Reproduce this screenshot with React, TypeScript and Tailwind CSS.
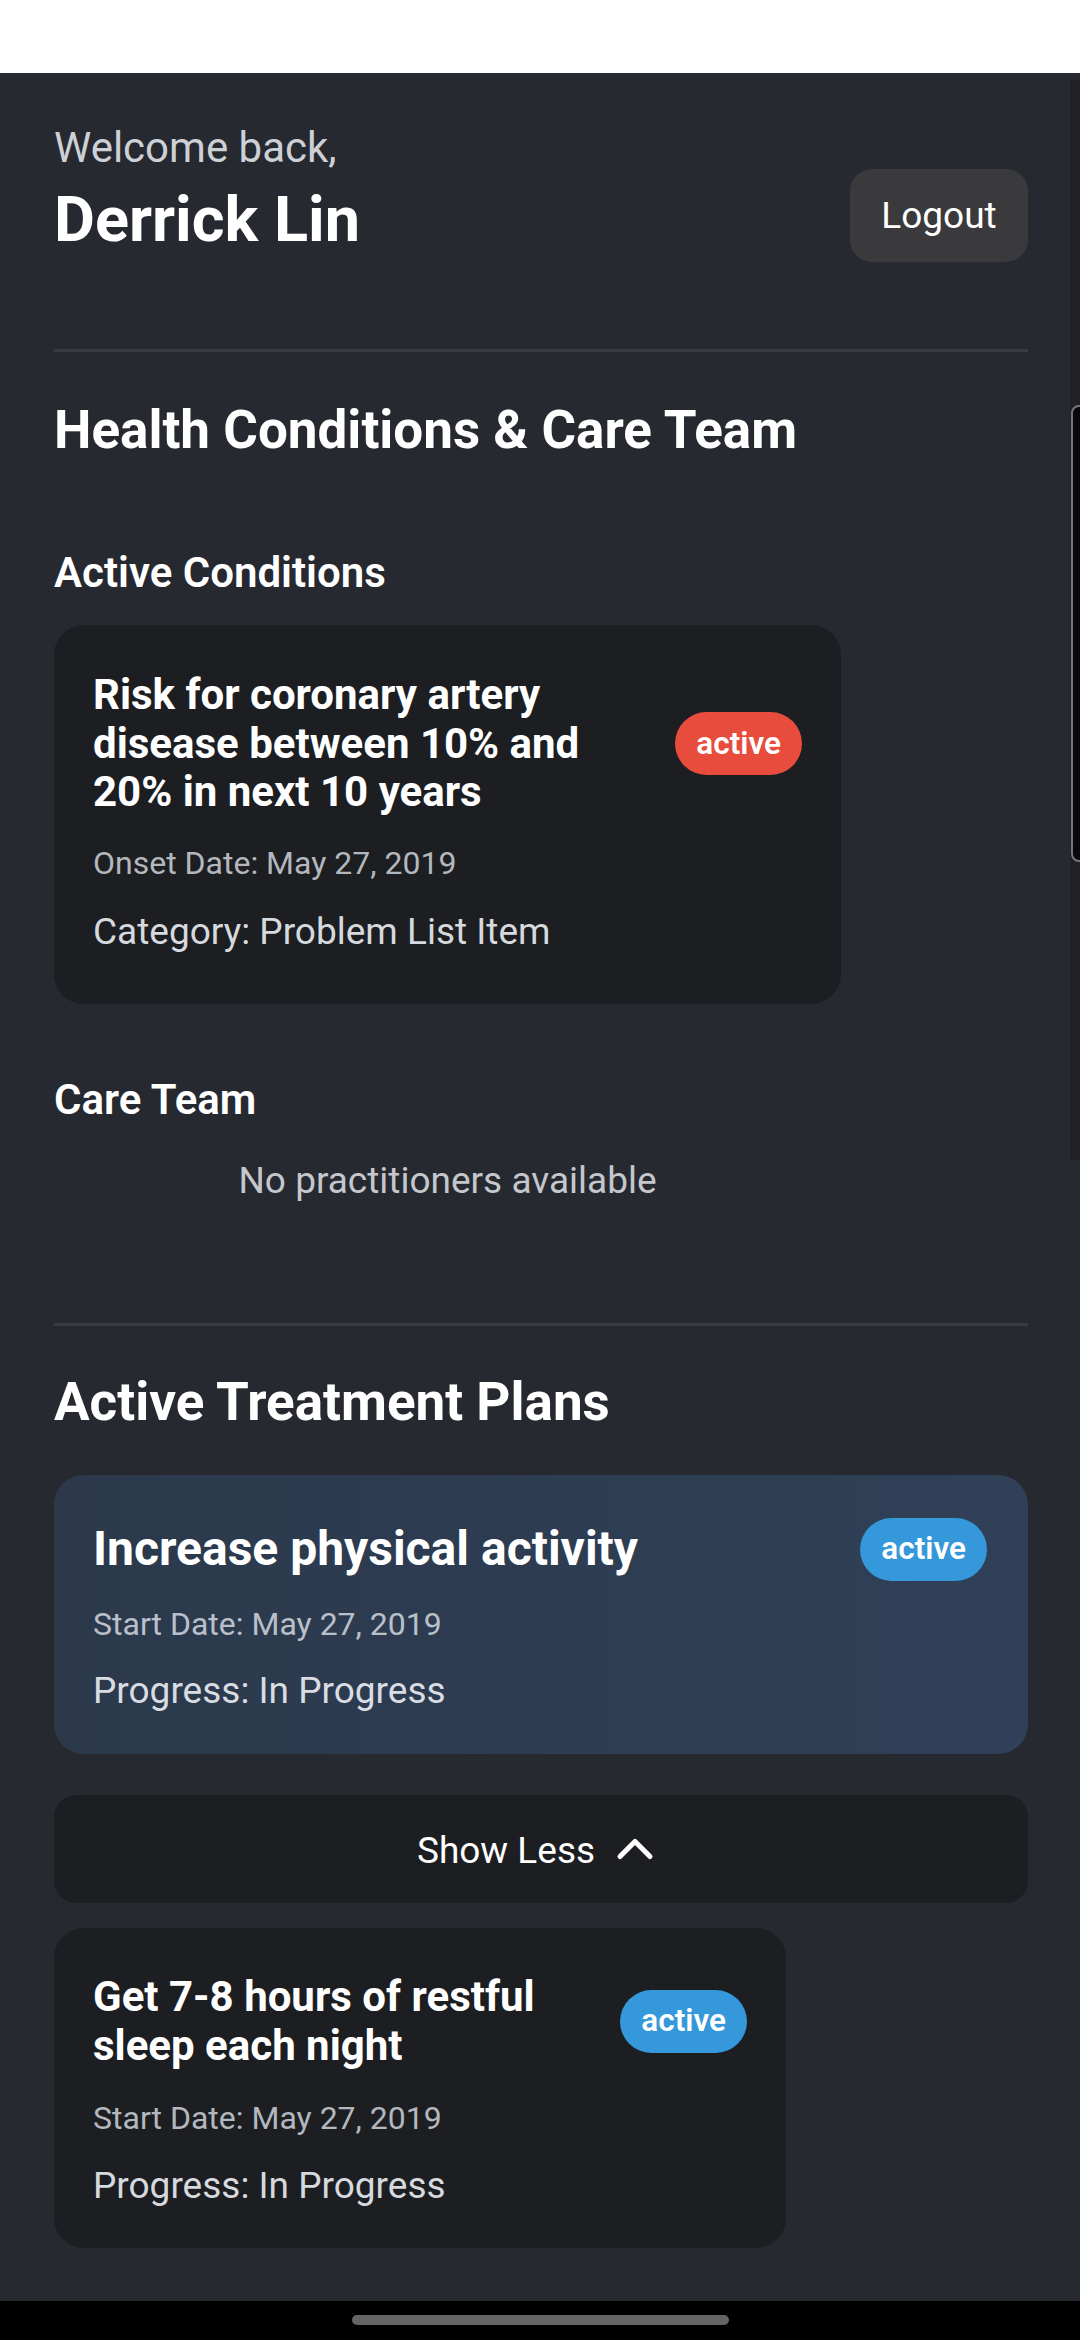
import React from "react";
import { ChevronUp } from "lucide-react";

function Badge({ color }: { color: "red" | "blue" }) {
  return (
    <div
      className={
        "shrink-0 h-[63px] px-[21px] rounded-full flex items-center text-white text-[31.5px] leading-none font-semibold " +
        (color === "red" ? "bg-[#e74c3c]" : "bg-[#3498db]")
      }
    >
      active
    </div>
  );
}

export default function App() {
  return (
    <div className="relative w-[1080px] h-[2340px] overflow-hidden flex flex-col font-['Roboto',sans-serif]">
      <div className="h-[73px] shrink-0 bg-white" />
      <div className="flex-1 bg-[#262930] pl-[54px] pr-[52px] pt-[50px] flex flex-col">
        {/* Header */}
        <div className="flex justify-between items-start">
          <div className="flex flex-col">
            <p className="text-[42px] leading-[50px] text-[#cdd0d5]">Welcome back,</p>
            <h1 className="mt-[11px] text-[63px] leading-[72px] font-bold text-white">Derrick Lin</h1>
          </div>
          <button className="mt-[46px] w-[178px] h-[93px] rounded-[22px] bg-[#3a3a3c] text-[37px] text-white flex items-center justify-center">
            Logout
          </button>
        </div>

        <div className="mt-[87px] h-[3px] bg-[#383b42]" />

        <h2 className="mt-[47px] text-[53px] leading-[62px] font-bold text-white">
          Health Conditions &amp; Care Team
        </h2>

        <h3 className="mt-[86.5px] text-[42px] leading-[50px] font-semibold text-white">Active Conditions</h3>

        <div className="mt-[27.5px] w-[787px] rounded-[30px] bg-[#1c1e22] px-[39px] pt-[46px] pb-[44.5px] flex flex-col">
          <div className="flex items-center gap-[42px]">
            <p className="flex-1 text-[42px] leading-[48.5px] font-bold text-white">
              Risk for coronary artery disease between 10% and 20% in next 10 years
            </p>
            <Badge color="red" />
          </div>
          <p className="mt-[23.5px] text-[32px] leading-[46px] text-[#b3b7be]">Onset Date: May 27, 2019</p>
          <p className="mt-[19px] text-[37px] leading-[54px] text-[#d6d9de]">Category: Problem List Item</p>
        </div>

        <h3 className="mt-[71.5px] text-[42px] leading-[50px] font-semibold text-white">Care Team</h3>
        <p className="mt-[29px] w-[787px] text-center text-[37px] leading-[54px] text-[#c4c7cc]">
          No practitioners available
        </p>

        <div className="mt-[115px] h-[3px] bg-[#383b42]" />

        <h2 className="mt-[44.5px] text-[53px] leading-[62px] font-bold text-white">Active Treatment Plans</h2>

        <div className="mt-[42px] rounded-[30px] bg-gradient-to-r from-[#2b394b] to-[#2f4058] pl-[39px] pr-[41px] pt-[43px] pb-[36px] flex flex-col">
          <div className="flex items-center gap-[42px]">
            <p className="flex-1 text-[48px] leading-[56px] font-bold text-white">Increase physical activity</p>
            <Badge color="blue" />
          </div>
          <p className="mt-[20px] text-[32px] leading-[46px] text-[#b9c0ca]">Start Date: May 27, 2019</p>
          <p className="mt-[17.5px] text-[37px] leading-[54px] text-[#d9dde3]">Progress: In Progress</p>
        </div>

        <button className="mt-[41px] h-[108px] rounded-[22px] bg-[#1c1e22] flex items-center justify-center text-white">
          <span className="text-[37px] leading-none pt-[2px]">Show Less</span>
          <ChevronUp size={60} strokeWidth={2} className="ml-[10px] text-white" />
        </button>

        <div className="mt-[25px] w-[732px] rounded-[30px] bg-[#1c1e22] px-[39px] pt-[44px] pb-[35.5px] flex flex-col">
          <div className="flex items-center gap-[42px]">
            <p className="flex-1 text-[42px] leading-[49px] font-bold text-white">
              Get 7-8 hours of restful sleep each night
            </p>
            <Badge color="blue" />
          </div>
          <p className="mt-[24.5px] text-[32px] leading-[46px] text-[#b3b7be]">Start Date: May 27, 2019</p>
          <p className="mt-[18px] text-[37px] leading-[54px] text-[#d6d9de]">Progress: In Progress</p>
        </div>
      </div>

      {/* Android nav bar */}
      <div className="h-[39px] shrink-0 bg-black flex justify-center pt-[14px]">
        <div className="w-[377px] h-[10px] rounded-full bg-[#646464]" />
      </div>

      {/* Scrollbar overlay */}
      <div className="absolute top-[80px] right-0 w-[10px] h-[1080px] bg-[#1f2125]" />
      <div className="absolute top-[405px] right-[-3px] w-[12px] h-[457px] rounded-l-[8px] border-2 border-[#75767a] bg-[#08090c]" />
    </div>
  );
}
